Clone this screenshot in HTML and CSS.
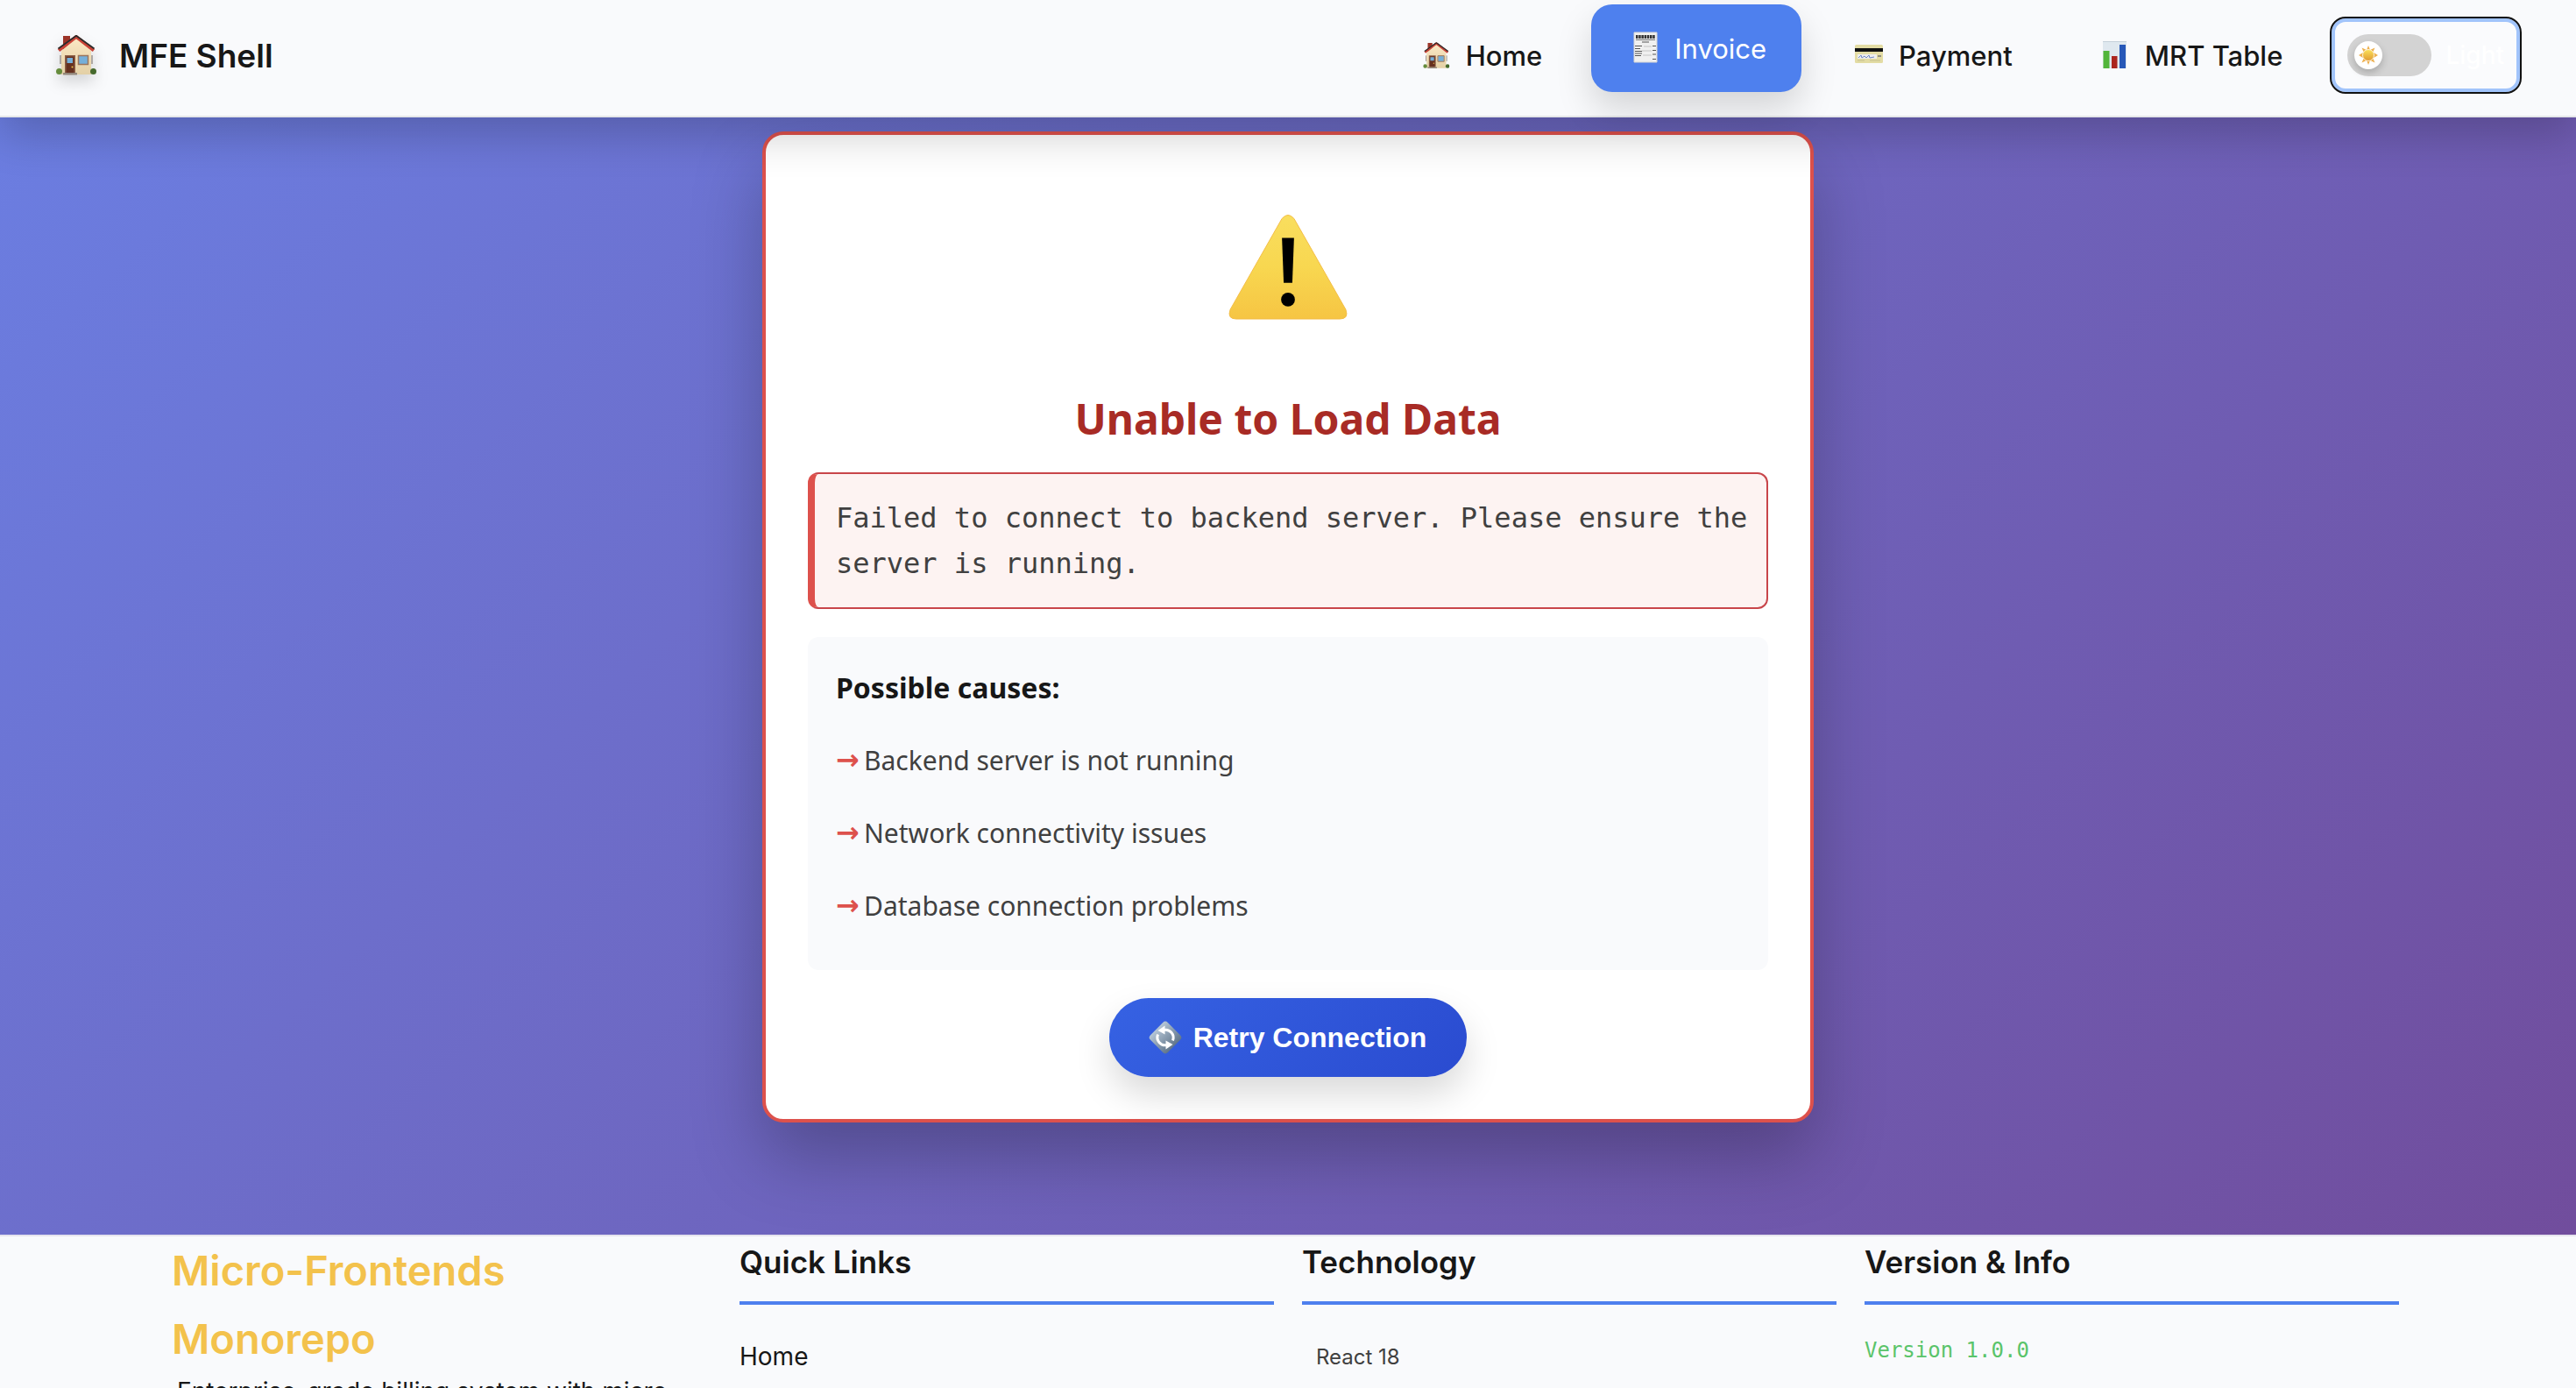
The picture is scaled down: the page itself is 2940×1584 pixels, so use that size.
FILE: index.html
```html
<!DOCTYPE html>
<html lang="en">
<head>
<meta charset="utf-8">
<title>MFE Shell</title>
<link rel="stylesheet" href="styles.css">
</head>
<body>
<svg class="defs" aria-hidden="true">
  <defs>
    <linearGradient id="warn" x1="0" y1="0" x2="0" y2="1"><stop offset="0" stop-color="#f9de5e"/><stop offset=".5" stop-color="#f8d750"/><stop offset="1" stop-color="#f6c543"/></linearGradient>
    <linearGradient id="sun" x1="0" y1="0" x2="0" y2="1"><stop offset="0" stop-color="#fbe25a"/><stop offset="1" stop-color="#e09a33"/></linearGradient>
    <linearGradient id="wall" x1="0" y1="0" x2="0" y2="1"><stop offset="0" stop-color="#fbe8c4"/><stop offset="1" stop-color="#e3d0a6"/></linearGradient>
    <linearGradient id="steel" x1="0" y1="1" x2="1" y2="1"><stop offset="0" stop-color="#b5c6d6"/><stop offset="1" stop-color="#60758a"/></linearGradient>
    <symbol id="house" viewBox="0 0 46 46">
      <path d="M8 1h8v12l-8 7z" fill="#9c3428"/>
      <path d="M6 18L23 3l17 15v27H6z" fill="url(#wall)"/>
      <path d="M3 17.500L23 2l20 15.500" fill="none" stroke="#c94236" stroke-width="4"/>
      <path d="M2.500 15.500L23 .800l20.500 14.700" fill="none" stroke="#2a2b2b" stroke-width="1.800"/>
      <path d="M10 23h12v20H10z" fill="#8c5f47"/><path d="M11.500 24.500h9V43h-9z" fill="#65301f"/>
      <path d="M12.500 26h6.500v6h-6.500zM26 24h10v9H26z" fill="#75afd9"/>
      <path d="M25.500 23.500h11v10h-11z" fill="none" stroke="#9b755b" stroke-width="1.500"/>
      <path d="M5 23v10M41 23v10" stroke="#75695e"/>
      <circle cx="18.500" cy="36.500" r="1" fill="#f4c64c"/>
      <circle cx="3.500" cy="41.500" r="3.500" fill="#668c3d"/><circle cx="42.500" cy="41.500" r="3.500" fill="#45692c"/>
      <path d="M8 43h16v2.500H8z" fill="#93877b"/>
    </symbol>
  </defs>
</svg>
<div class="page">
  <header class="header">
    <a class="logo" href="#"><svg class="logo-icon" aria-hidden="true"><use href="#house"/></svg><span>MFE Shell</span></a>
    <nav class="nav">
      <a class="nav-link" href="#"><svg class="nav-icon" viewBox="-8 -8 61 61"><use href="#house" width="46" height="46"/></svg>Home</a>
      <a class="nav-link active" href="#"><svg class="nav-icon" viewBox="0 0 40 40">
        <path d="M8 2h26v34H8z" fill="#f0f0f0" stroke="#d5d5d5"/><path d="M10 7h22" stroke="#333" stroke-width="4" stroke-dasharray="2.500 .700"/><path d="M10 10.500h22" stroke="#777"/>
        <path d="M17 13h8M9 17.500h8M29 17.500h4M9 20.500h6M29 22.500h4M9 23.500h8M9 26h8M9 28.500h7M29 27h4M29 32.500h4" stroke="#555" stroke-width="1.200"/><path d="M19 18h9M17 23h11M18 28h10" stroke="#c4c4c4"/></svg>Invoice</a>
      <a class="nav-link" href="#"><svg class="nav-icon" viewBox="0 0 40 40">
        <rect x="4" y="8" width="32" height="21" rx="1.500" fill="#e3dca4"/><path d="M4 12h32v4H4z" fill="#111"/><path d="M7 19h22v5H7z" fill="#eee"/>
        <path d="M8 23l3-3 1 3 3-2 2 2 3-3 1 3 5-1" fill="none" stroke="#6f88c4"/><path d="M30 21h4" stroke="#777" stroke-width="1.500"/><path d="M7 26h8M21 26h12" stroke="#c5bf8e"/></svg>Payment</a>
      <a class="nav-link" href="#"><svg class="nav-icon" viewBox="0 0 40 40">
        <path d="M6 4h27v31H6z" fill="#dfe8ef"/><path d="M6 4.500h27" stroke="#c5d1da"/><path d="M6.500 15h7v20h-7z" fill="#52b53a"/><path d="M16 21h6.500v14H16z" fill="#ab251e"/><path d="M25 8h7v27h-7z" fill="#2758b8"/></svg>MRT Table</a>
      <button class="theme" type="button"><span class="track"><span class="thumb"><svg width="22" height="22" viewBox="0 0 22 22"><path d="M11 0l2 5 5.500-2.500-2.200 5L22 11l-5.700 3.500 2.200 5L13 17l-2 5-2-5-5.500 2.500 2.200-5L0 11l5.700-3.500-2.200-5L9 5z" fill="#eeb04e"/><circle cx="11" cy="11" r="6.500" fill="url(#sun)" stroke="#fff" stroke-width=".800"/></svg></span></span>Light</button>
    </nav>
  </header>
  <main class="main">
    <section class="card">
      <div class="warning"><svg width="136" height="120" viewBox="0 0 138 122" role="img" aria-label="Warning">
        <path d="M62 4.500Q69-3.500 76 4.500L136 110Q140 121 129 121H9Q-2 121 2 110Z" fill="url(#warn)" stroke="#f3bd45" stroke-width="1"/>
        <path d="M62 27h14l-2 52h-10z"/><circle cx="69" cy="98.500" r="8"/></svg></div>
      <h1 class="title">Unable to Load Data</h1>
      <p class="message">Failed to connect to backend server. Please ensure the server is running.</p>
      <div class="causes">
        <h2 class="causes-title">Possible causes:</h2>
        <ul class="causes-list"><li>Backend server is not running</li><li>Network connectivity issues</li><li>Database connection problems</li></ul>
      </div>
      <button class="retry" type="button"><svg width="40" height="40" viewBox="0 0 40 40" aria-hidden="true"><rect x="6" y="6" width="28" height="28" rx="4" transform="rotate(45 20 20)" fill="url(#steel)"/>
        <g id="turn"><path d="M18 11.500a9 9 0 0 1 10.500 12" fill="none" stroke="#fff" stroke-width="3"/><path d="M11.500 12l8-5.500v10z" fill="#fff"/></g><use href="#turn" transform="rotate(180 20 20)"/></svg>Retry Connection</button>
    </section>
  </main>
  <footer class="footer">
    <div class="footer-grid">
      <div><h2 class="brand">Micro-Frontends Monorepo</h2><p class="about">Enterprise-grade billing system with micro-</p></div>
      <div><h3 class="col-title">Quick Links</h3><a class="footer-link" href="#">Home</a></div>
      <div><h3 class="col-title">Technology</h3><p class="tech">React 18</p></div>
      <div><h3 class="col-title">Version &amp; Info</h3><p class="version">Version 1.0.0</p></div>
    </div>
  </footer>
</div>
</body>
</html>
```
FILE: styles.css
```css
* { box-sizing: border-box; }
body { margin: 0; font-family: Inter, "Liberation Sans", sans-serif; color: #171717; }
h1, h2, h3, p, ul { margin: 0; padding: 0; }
a { color: inherit; text-decoration: none; }
.defs { position: absolute; width: 0; height: 0; }
.page { display: flex; flex-direction: column; height: 100vh; overflow: hidden; background: linear-gradient(135deg, #6b7fe3 0%, #714b9a 100%); }

.header { position: relative; z-index: 2; flex: none; display: flex; justify-content: space-between; align-items: center; padding: 13px 64px 19px; background: #f9fafc; border-bottom: 2px solid #e5e7e9; box-shadow: 0 20px 50px rgba(0, 0, 0, .2); }
.logo { display: flex; align-items: center; gap: 26px; font-size: 37px; font-weight: 600; }
.logo-icon { width: 46px; height: 46px; filter: drop-shadow(0 8px 8px rgba(0, 0, 0, .15)); }
.nav { display: flex; align-items: center; gap: 16px; }
.nav-link { display: flex; align-items: center; gap: 14px; height: 100px; padding: 0 40px 0 41px; border-radius: 24px; font-size: 31px; font-weight: 500; }
.nav-icon { width: 40px; height: 40px; }
.active { margin-top: -16px; color: #fff; background: #4e80ee; font-weight: 400; box-shadow: 0 20px 40px rgba(0, 0, 0, .15); }
.theme { display: flex; align-items: center; gap: 16px; height: 84px; padding: 0 18px; border: 0; border-radius: 16px; outline: 2px solid #111; box-shadow: inset 0 0 0 4px #a1c4fb; background: #fafbfd; color: #fff; font: 500 28px Inter, sans-serif; }
.track { display: flex; align-items: center; width: 96px; height: 48px; padding: 8px; border-radius: 24px; background: #d3d3d3; }
.thumb { display: grid; place-items: center; width: 32px; height: 32px; border-radius: 50%; background: #fff; box-shadow: 0 4px 8px rgba(0, 0, 0, .2); }

.main { flex: none; padding: 16px 32px 128px; }
.card { display: flex; flex-direction: column; align-items: center; max-width: 1200px; margin: 0 auto; padding: 48px; border: 4px solid #dd514c; border-radius: 24px; background: #fff; box-shadow: 0 40px 80px rgba(0, 0, 0, .25); font-family: "Noto Sans", sans-serif; }
.warning { height: 238px; padding-top: 43px; }
.title { margin-bottom: 23px; font-size: 48px; line-height: 76px; font-weight: 700; color: #a82b25; }
.message { width: 100%; padding: 24px 12px 24px 24px; border: 2px solid #c8454a; border-left: 8px solid #dd514c; border-radius: 12px; background: #fdf3f2; color: #404040; font: 32px/52px "DejaVu Sans Mono", monospace; }
.causes { width: 100%; margin: 32px 0; padding: 32px; border-radius: 12px; background: #f9fafc; font-size: 30px; }
.causes-title { margin-bottom: 16px; font-size: 32px; line-height: 51px; }
.causes-list { list-style: none; color: #404040; }
.causes-list li { display: flex; line-height: 83px; }
.causes-list li::before { content: "→"; width: 32px; color: #dd514c; font-family: "DejaVu Sans", sans-serif; font-size: 32px; font-weight: 700; }
.retry { display: flex; align-items: center; justify-content: center; gap: 12px; height: 90px; padding: 0 46px 0 44px; border: 0; border-radius: 45px; background: linear-gradient(135deg, #3662e3, #2a4bd0); box-shadow: 0 20px 40px rgba(0, 0, 0, .15); color: #fff; font: 700 32px "Liberation Sans", sans-serif; }

.footer { flex: 1; min-height: 0; padding: 0 202px; background: #f9fafc; border-top: 2px solid #e6e4ee; }
.footer-grid { display: grid; grid-template-columns: repeat(4, 1fr); gap: 32px; }
.brand { margin: 0 -6px; font-size: 47px; line-height: 78px; font-weight: 600; color: #f3c24c; }
.about { font-size: 28px; line-height: 42px; }
.col-title { height: 78px; margin-bottom: 32px; border-bottom: 4px solid #4e80ee; font-size: 35px; line-height: 58px; font-weight: 600; }
.footer-link { font-size: 28px; line-height: 54px; }
.tech { padding: 8px 16px; font-size: 24px; line-height: 40px; color: #404040; }
.version { color: #5ac46a; font: 24px/40px "DejaVu Sans Mono", monospace; }
```
